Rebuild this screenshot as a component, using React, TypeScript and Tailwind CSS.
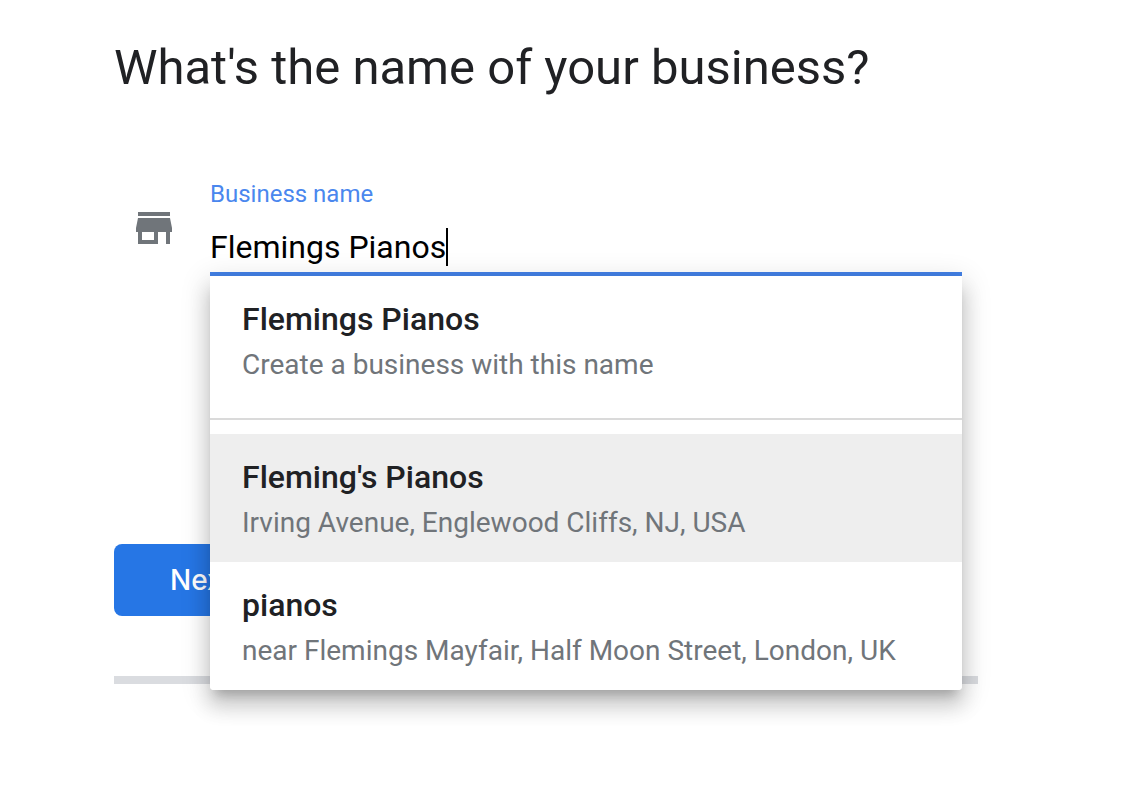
import React, { useState } from "react";

interface Suggestion {
  name: string;
  detail: string;
}

const PLACES: Suggestion[] = [
  { name: "Fleming's Pianos", detail: "Irving Avenue, Englewood Cliffs, NJ, USA" },
  { name: "pianos", detail: "near Flemings Mayfair, Half Moon Street, London, UK" },
];

export default function App() {
  const [name, setName] = useState("Flemings Pianos");
  const [active, setActive] = useState(0);

  return (
    <main className="min-h-screen bg-white px-[114px] pt-9 font-['Roboto',sans-serif]">
      <form className="max-w-[864px]" onSubmit={(e) => e.preventDefault()}>
        <h1 className="whitespace-nowrap text-[49px] leading-16 text-[#202124]">
          What's the name of your business?
        </h1>

        {/* Name field */}
        <div className="mt-[78px] flex pr-4">
          <div className="w-24 shrink-0 pt-[26px] pl-4">
            <StoreIcon />
          </div>
          <div className="relative flex-1">
            <label htmlFor="business-name" className="block text-[24px] leading-8 text-[#4a87ee]">
              Business name
            </label>
            <div className="mt-4 flex h-[50px] items-center border-b-4 border-[#4381e6] pb-1">
              <input
                id="business-name"
                type="text"
                autoComplete="off"
                value={name}
                onChange={(e) => setName(e.target.value)}
                className="field-sizing-content max-w-full bg-transparent text-[32px] leading-10 text-black caret-transparent outline-none"
              />
              <span className="h-[38px] w-0.5 bg-black" />
            </div>

            {/* Suggestions */}
            <div className="absolute inset-x-0 top-full z-10 rounded-b bg-white shadow-[0_10px_10px_-6px_rgba(0,0,0,0.2),0_16px_20px_2px_rgba(0,0,0,0.14),0_6px_28px_4px_rgba(0,0,0,0.12)]">
              <SuggestionRow name={name} detail="Create a business with this name" />
              <hr className="my-3.5 border-t-2 border-[#dadada]" />
              {PLACES.map((place, i) => (
                <SuggestionRow
                  key={place.name}
                  name={place.name}
                  detail={place.detail}
                  active={i === active}
                  onHover={() => setActive(i)}
                />
              ))}
            </div>
          </div>
        </div>

        <button
          type="submit"
          className="mt-[268px] block h-18 rounded-lg bg-[#2676e5] px-14 font-['Inter',sans-serif] text-[28px] leading-9 font-medium text-white"
        >
          Next
        </button>
        <div className="mt-15 h-2 bg-[#dadce0]" />
      </form>
    </main>
  );
}

interface RowProps extends Suggestion {
  active?: boolean;
  onHover?: () => void;
}

function SuggestionRow({ name, detail, active = false, onHover }: RowProps) {
  return (
    <button
      type="button"
      onMouseEnter={onHover}
      className={`flex h-32 w-full flex-col px-8 pt-[19px] text-left last:rounded-b ${active ? "bg-[#eeeeee]" : "bg-white"}`}
    >
      <span className="block w-full truncate text-[32px] leading-12 font-medium text-[#202124]">{name}</span>
      <span className="block w-full truncate text-[28px] leading-11 text-[#70757a]">{detail}</span>
    </button>
  );
}

function StoreIcon() {
  return (
    <svg viewBox="0 0 24 24" className="size-12 fill-[#70757a]" aria-hidden="true">
      <path d="M20 4H4v2h16V4zm1 10v-2l-1-5H4l-1 5v2h1v6h10v-6h4v6h2v-6h1zm-9 4H6v-4h6v4z" />
    </svg>
  );
}
